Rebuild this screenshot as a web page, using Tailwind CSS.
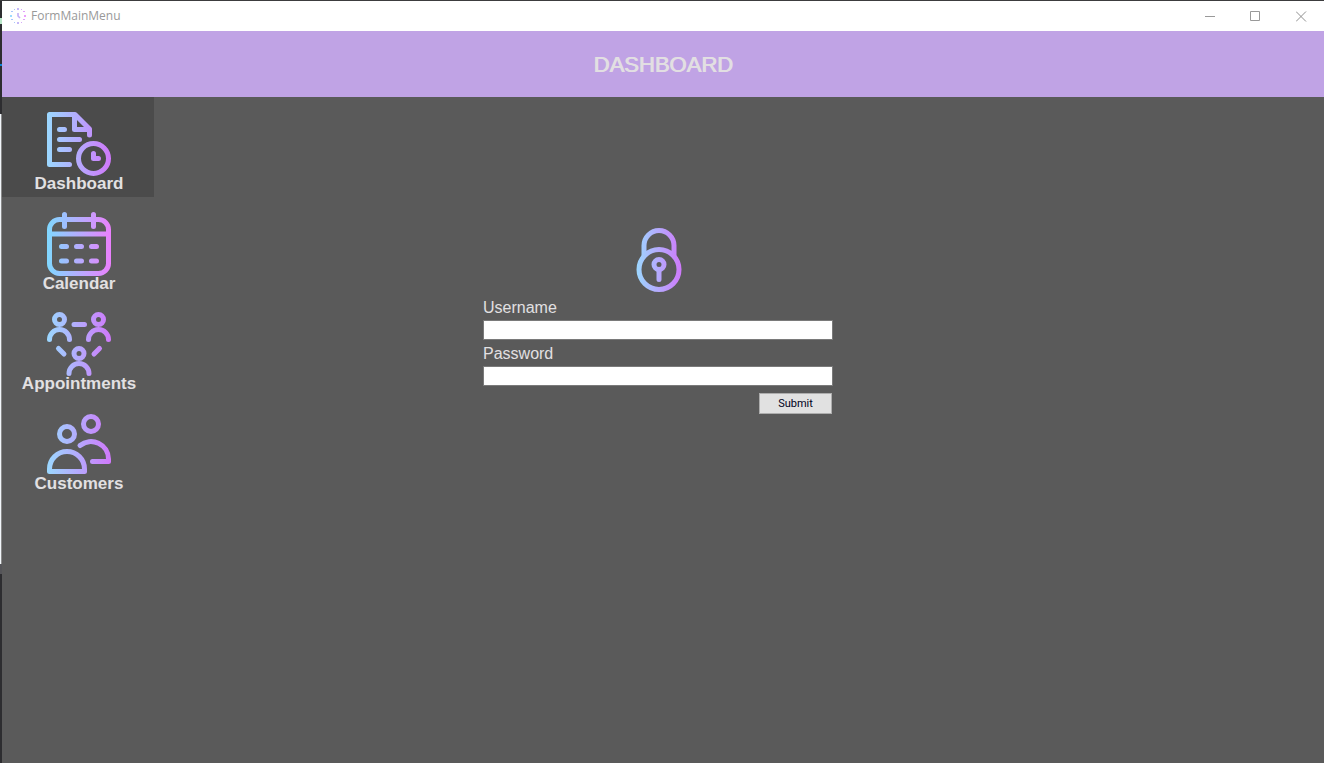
<!DOCTYPE html>
<html lang="en">
<head>
<meta charset="utf-8">
<title>FormMainMenu</title>
<script src="https://cdn.jsdelivr.net/npm/@tailwindcss/browser@4"></script>
</head>
<body class="flex min-h-screen flex-col bg-[#5a5a5a] font-['Liberation_Sans',Arial,sans-serif] text-[#e2e0e2]">
<svg class="absolute size-0" aria-hidden="true">
  <defs>
    <linearGradient id="soft" gradientUnits="userSpaceOnUse" x1="0" y1="32" x2="64" y2="32"><stop offset="0" stop-color="#9bd8ff"/><stop offset="1" stop-color="#d078fb"/></linearGradient>
    <linearGradient id="softLock" gradientUnits="userSpaceOnUse" x1="9" y1="32" x2="55" y2="32"><stop offset="0" stop-color="#9bd8ff"/><stop offset="1" stop-color="#d078fb"/></linearGradient>
    <linearGradient id="vivid" gradientUnits="userSpaceOnUse" x1="0" y1="32" x2="64" y2="32"><stop offset="0" stop-color="#80d8ff"/><stop offset="1" stop-color="#ea80fc"/></linearGradient>
  </defs>
</svg>
<div class="h-px bg-[#3c3c3e]"></div>
<div class="flex flex-1">
  <div class="flex w-0.5 flex-col" aria-hidden="true">
    <div class="h-[17px] bg-[#2d2d30]"></div>
    <div class="h-1.5 bg-[#b8e6c8]"></div>
    <div class="h-10 bg-[#2d2d30]"></div>
    <div class="h-0.5 bg-[#0a84d8]"></div>
    <div class="h-12 bg-[#2d2d30]"></div>
    <div class="h-[450px] border-r border-[#8a8a8a] bg-[#f2f6fa]"></div>
    <div class="h-2.5 bg-[#555559]"></div>
    <div class="flex-1 bg-[#2d2d30]"></div>
  </div>
  <div class="flex min-w-0 flex-1 flex-col">
    <div class="flex h-[30px] items-center bg-white text-[#999999]">
      <svg class="ml-2 size-4" viewBox="0 0 16 16" fill="none" aria-hidden="true">
        <g fill="#a9c6fb">
          <rect x="7" y="0" width="2" height="2" fill="#c6b8f8"/><rect x="4" y="1" width="1" height="1"/><rect x="11" y="1" width="1" height="1" fill="#d5a9fa"/>
          <rect x="1" y="3" width="2" height="1"/><rect x="13" y="3" width="2" height="1" fill="#e19ffb"/>
          <rect x="0" y="7" width="2" height="2" fill="#9bdcff"/><rect x="14" y="7" width="2" height="2" fill="#eba0fc"/>
          <rect x="1" y="11" width="2" height="1"/><rect x="13" y="11" width="2" height="1" fill="#e19ffb"/>
          <rect x="4" y="14" width="1" height="1"/><rect x="11" y="14" width="1" height="1" fill="#d5a9fa"/><rect x="7" y="14" width="2" height="2" fill="#c6b8f8"/>
        </g>
        <path d="M8 5V8L10 10" stroke="#c3b0f7" stroke-width="1.6"/>
      </svg>
      <span class="ml-[5px] font-['Open_Sans',sans-serif] text-xs">FormMainMenu</span>
      <div class="ml-auto flex h-full">
        <button class="flex w-[46px] items-center justify-center" aria-label="Minimize"><svg class="size-[11px]" viewBox="0 0 11 11" aria-hidden="true"><path d="M0 5.5H10" stroke="#999" /></svg></button>
        <button class="flex w-[45px] items-center justify-center" aria-label="Maximize"><svg class="size-[11px]" viewBox="0 0 11 11" fill="none" aria-hidden="true"><path d="M.5 .5H9.5V9.5H.5Z" stroke="#999"/></svg></button>
        <button class="flex w-[46px] items-center justify-center" aria-label="Close"><svg class="size-[11px]" viewBox="0 0 11 11" aria-hidden="true"><path d="M0 .5L10 10.5M10 .5L0 10.5" stroke="#8f8f8f"/></svg></button>
      </div>
    </div>
    <header class="flex h-[66px] items-center justify-center bg-[#c0a3e5]">
      <h1 class="text-[22px] text-[#e2dfe2] [text-shadow:1px_0_currentColor]">DASHBOARD</h1>
    </header>
    <div class="flex flex-1">
      <nav class="flex w-[152px] flex-col text-[17px] leading-5 font-bold" aria-label="Main menu">
        <button class="flex h-[100px] flex-col items-center bg-[#4b4b4b] pt-[15px]">
          <svg class="ml-0.5 size-16 shrink-0" viewBox="0 0 64 64" fill="none" stroke="url(#soft)" stroke-width="5" stroke-linecap="round" stroke-linejoin="round" aria-hidden="true"><path d="M22.5 52.5H2.5V2.5H28L42.5 17V23M27.5 3V17.5H42.5M12.5 17.5H17.5M12.5 27.5H32.5M12.5 37.5H22.5M46.5 41.5V46.5H51.5"/><circle cx="46.5" cy="46.5" r="15"/></svg>
          <span class="-mt-0.5 ml-0.5">Dashboard</span>
        </button>
        <button class="flex h-[100px] flex-col items-center pt-[15px]">
          <svg class="ml-0.5 size-16 shrink-0" viewBox="0 0 64 64" fill="none" stroke="url(#vivid)" stroke-width="5" stroke-linecap="round" stroke-linejoin="round" aria-hidden="true"><rect x="2.5" y="7.5" width="59" height="54" rx="10"/><path d="M2.5 22H61.5M17.5 2.5V14.5M46.5 2.5V14.5M14.5 34.5H19.5M29.5 34.5H34.5M44.5 34.5H49.5M14.5 49H19.5M29.5 49H34.5M44.5 49H49.5"/></svg>
          <span class="-mt-0.5 ml-0.5">Calendar</span>
        </button>
        <button class="flex h-[100px] flex-col items-center pt-[15px]">
          <svg class="ml-0.5 size-16 shrink-0" viewBox="0 0 64 64" fill="none" stroke="url(#soft)" stroke-width="5" stroke-linecap="round" stroke-linejoin="round" aria-hidden="true"><circle cx="12.5" cy="7.5" r="5"/><circle cx="51.5" cy="7.5" r="5"/><circle cx="32" cy="41.5" r="5"/><path d="M2.5 27.5A10 10 0 0 1 22.5 27.5M41.5 27.5A10 10 0 0 1 61.5 27.5M22 61.5A10 10 0 0 1 42 61.5M27 12.5H37.5M11.5 36.5L17 42M52.5 36.5L47 42"/></svg>
          <span class="-mt-0.5 ml-0.5">Appointments</span>
        </button>
        <button class="flex h-[100px] flex-col items-center pt-[15px]">
          <svg class="ml-0.5 size-16 shrink-0" viewBox="0 0 64 64" fill="none" stroke="url(#soft)" stroke-width="5" stroke-linecap="round" stroke-linejoin="round" aria-hidden="true"><circle cx="20" cy="22" r="7.5"/><circle cx="44" cy="12" r="7.5"/><path d="M2.5 59.5V57A17.5 17.5 0 0 1 37.5 57V59.5ZM33 33.5A17.5 17.5 0 0 1 61.5 47V49.5H45.5"/></svg>
          <span class="-mt-0.5 ml-0.5">Customers</span>
        </button>
      </nav>
      <main class="flex flex-1 justify-center pt-[131px] pr-[162px]">
        <form class="flex w-[350px] flex-col" onsubmit="return false">
          <svg class="ml-0.5 size-16 self-center" viewBox="0 0 64 64" fill="none" stroke="url(#softLock)" stroke-width="5" stroke-linecap="round" aria-hidden="true"><circle cx="32" cy="41.5" r="20"/><circle cx="32" cy="36.5" r="5"/><path d="M32 42V51.5M17 27V17.5A15 15 0 0 1 47 17.5V27"/></svg>
          <label for="username" class="mt-1.5 mb-0.5 leading-5">Username</label>
          <input id="username" type="text" autocomplete="off" class="h-5 border border-[#7a7a7a] bg-white px-1 text-sm text-black">
          <label for="password" class="mt-1 mb-0.5 leading-5">Password</label>
          <input id="password" type="password" autocomplete="off" class="h-5 border border-[#7a7a7a] bg-white px-1 text-sm text-black">
          <button type="submit" class="mt-[7px] mr-px h-[21px] w-[73px] self-end border border-[#adadad] bg-[#e1e1e1] font-[Roboto,sans-serif] text-[11px] leading-4 text-[#000020]">Submit</button>
        </form>
      </main>
    </div>
  </div>
</div>
</body>
</html>
